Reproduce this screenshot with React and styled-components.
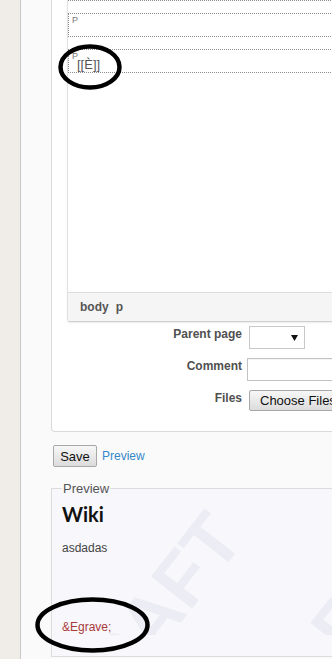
import styled, { createGlobalStyle } from "styled-components";

const GlobalStyle = createGlobalStyle`
  *, *::before, *::after { box-sizing: border-box; }
  html, body { margin: 0; padding: 0; }
  body {
    font-family: "Liberation Sans", Arial, sans-serif;
    font-size: 12px;
    color: #333;
    background: #fafafa;
  }
`;

const blocks = [
  { id: 1, text: "" },
  { id: 2, text: "" },
  { id: 3, text: "[[È]]" },
];

const App = () => {
  return (
    <Page>
      <GlobalStyle />
      <Sidebar />
      <Main>
        <Box>
          <Editor>
            <Frame>
              {blocks.map((b) => (
                <Block key={b.id}>{b.text}</Block>
              ))}
            </Frame>
            <StatusBar>
              <span>body</span>
              <span>p</span>
            </StatusBar>
          </Editor>

          <Form>
            <Label>Parent page</Label>
            <FakeSelect>
              <svg width="7" height="6" viewBox="0 0 7 6">
                <path d="M0 0 H7 L3.5 6 Z" fill="#111" />
              </svg>
            </FakeSelect>
            <Label>Comment</Label>
            <TextInput type="text" />
            <Label>Files</Label>
            <FileButton type="button">Choose Files</FileButton>
          </Form>
        </Box>

        <Actions>
          <SaveButton type="button">Save</SaveButton>
          <Link href="#">Preview</Link>
        </Actions>

        <Preview>
          <Legend>Preview</Legend>
          <PreviewBody>
            <Watermark $left={45} $top={178}>DRAFT</Watermark>
            <Watermark $left={272} $top={138}>DRAFT</Watermark>
            <Title>Wiki</Title>
            <Para>asdadas</Para>
            <Para $gap={64} $color="#a83a3a">&amp;Egrave;</Para>
          </PreviewBody>
        </Preview>
      </Main>

      <Marker $x={58} $y={44} $w={64} $h={46} />
      <Marker $x={35} $y={597} $w={115} $h={56} />
    </Page>
  );
};

const Marker = ({ $x, $y, $w, $h }) => (
  <MarkerSvg
    width={$w}
    height={$h}
    viewBox={`0 0 ${$w} ${$h}`}
    style={{ left: $x, top: $y }}
  >
    <ellipse
      cx={$w / 2}
      cy={$h / 2}
      rx={$w / 2 - 2.5}
      ry={$h / 2 - 2.5}
      fill="none"
      stroke="#000"
      strokeWidth="4.5"
    />
  </MarkerSvg>
);

const Page = styled.div`
  position: relative;
  display: flex;
  width: 332px;
  height: 659px;
  overflow: hidden;
`;

const Sidebar = styled.div`
  flex: none;
  width: 21px;
  background: #f0ede8;
  border-right: 1px solid #c9c9c9;
`;

const Main = styled.div`
  flex: 1;
  min-width: 0;
  display: flex;
  flex-direction: column;
  align-items: flex-start;
  padding-left: 30px;
  background: #fafafa;
`;

const Box = styled.div`
  width: 420px;
  flex: none;
  background: #fff;
  border-left: 1px solid #dadada;
  border-bottom: 1px solid #dadada;
  border-bottom-left-radius: 4px;
  padding: 0 0 20px 15px;
`;

const Editor = styled.div`
  border-left: 1px solid #e2e2e2;
  border-bottom: 1px solid #cfcfcf;
  border-bottom-left-radius: 3px;
  box-shadow: 0 1px 2px rgba(0, 0, 0, 0.08);
  overflow: hidden;
`;

const Frame = styled.div`
  height: 292px;
  background: #fff;
  overflow: hidden;
`;

const Block = styled.p`
  position: relative;
  margin: 12px 0 0;
  height: 24px;
  border: 1px dotted #8c8c8c;
  border-right: none;
  padding: 8px 0 0 8px;
  font-size: 13px;
  line-height: 14px;
  color: #555;

  &:first-child {
    margin-top: -23px;
  }

  &::before {
    content: "P";
    position: absolute;
    top: 2px;
    left: 3px;
    font-size: 9px;
    line-height: 9px;
    color: #777;
  }
`;

const StatusBar = styled.div`
  height: 29px;
  display: flex;
  align-items: center;
  gap: 7px;
  padding-left: 12px;
  border-top: 1px solid #dcdcdc;
  background: #f5f5f5;
  font-weight: bold;
  font-size: 12px;
  color: #555;
`;

const Form = styled.div`
  display: grid;
  grid-template-columns: 175px auto;
  column-gap: 7px;
  row-gap: 9px;
  align-items: start;
  justify-items: start;
  margin-top: 4px;
`;

const Label = styled.label`
  justify-self: end;
  font-weight: bold;
  font-size: 12px;
  line-height: 14px;
  padding-top: 1px;
  color: #505050;
`;

const FakeSelect = styled.div`
  width: 56px;
  height: 23px;
  display: flex;
  align-items: center;
  justify-content: flex-end;
  padding: 1px 6px 0 0;
  border: 1px solid #c8c8c8;
  background: #fff;
`;

const TextInput = styled.input`
  width: 140px;
  height: 23px;
  margin: 0 0 0 -2px;
  border: 1px solid #c2c2c2;
  box-shadow: inset 0 1px 1px rgba(0, 0, 0, 0.05);
  background: #fff;
`;

const FileButton = styled.button`
  height: 21px;
  margin: 0;
  padding: 0 7px 0 10px;
  border: 1px solid #a8a8a8;
  border-radius: 2px;
  background: linear-gradient(#f7f7f7, #dcdcdc);
  font-family: "Liberation Sans", Arial, sans-serif;
  font-size: 13px;
  color: #111;
  white-space: nowrap;
`;

const Actions = styled.div`
  display: flex;
  align-items: center;
  gap: 5px;
  margin: 13px 0 0 2px;
`;

const SaveButton = styled.button`
  width: 44px;
  height: 22px;
  margin: 0;
  padding: 0;
  border: 1px solid #a8a8a8;
  border-radius: 2px;
  background: linear-gradient(#f7f7f7, #dcdcdc);
  font-family: "Liberation Sans", Arial, sans-serif;
  font-size: 13px;
  color: #111;
`;

const Link = styled.a`
  color: #3688c8;
  font-size: 12px;
  text-decoration: none;
`;

const Preview = styled.fieldset`
  width: 420px;
  height: 176px;
  flex: none;
  margin: 14px 0 0;
  padding: 0;
  border: 1px solid #dcdcdc;
  border-right: none;
  background: #f7f7fc;
`;

const Legend = styled.legend`
  margin-left: 10px;
  padding: 0 1px;
  font-size: 13px;
  line-height: 15px;
  color: #555;
`;

const PreviewBody = styled.div`
  position: relative;
  height: 100%;
  padding: 0 10px;
  overflow: hidden;
`;

const Watermark = styled.div`
  position: absolute;
  left: ${(p) => p.$left}px;
  top: ${(p) => p.$top}px;
  transform: rotate(-52deg);
  transform-origin: left bottom;
  font-family: "Liberation Sans", Arial, sans-serif;
  font-weight: bold;
  font-size: 76px;
  line-height: 76px;
  color: rgba(0, 0, 60, 0.045);
  white-space: nowrap;
  pointer-events: none;
`;

const Title = styled.h1`
  position: relative;
  margin: 6px 0 0;
  font-family: Lato, "Liberation Sans", sans-serif;
  font-weight: bold;
  font-size: 20px;
  line-height: 24px;
  color: #111;
`;

const Para = styled.p`
  position: relative;
  margin: ${(p) => p.$gap || 15}px 0 0;
  font-size: 12px;
  line-height: 15px;
  color: ${(p) => p.$color || "#444"};
`;

const MarkerSvg = styled.svg`
  position: absolute;
  pointer-events: none;
`;

export default App;
